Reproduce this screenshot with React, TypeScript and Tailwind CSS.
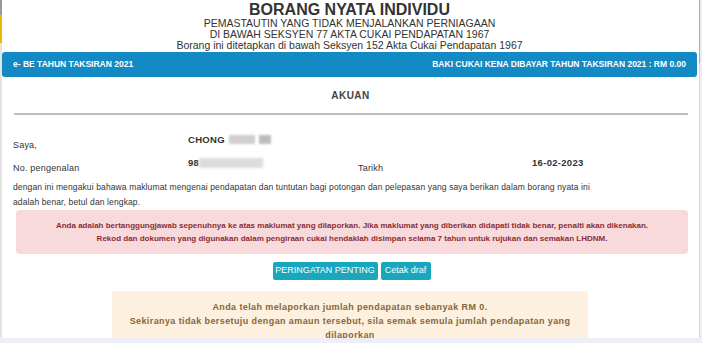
export default function App() {
  return (
    <div className="w-[702px] h-[343px] overflow-hidden flex flex-col bg-[#eeeef6] font-['Liberation_Sans',Arial,sans-serif]">
      <div className="flex flex-1 min-h-0">
        {/* left sliver of the page behind */}
        <div className="w-[2px] shrink-0 flex flex-col bg-white">
          <div className="h-[15px] bg-[#9a9a9a]" />
          <div className="h-[28px] bg-[#e6b800]" />
          <div className="flex-1 bg-[#e4e4e4]" />
        </div>

        <div className="w-[695px] shrink-0 bg-white overflow-hidden">
          {/* header */}
          <div className="h-[52px] text-center text-[#333] pt-[2px]">
            <div className="text-[16px] leading-[16px] font-bold">BORANG NYATA INDIVIDU</div>
            <div className="text-[10.5px] leading-[11px]">PEMASTAUTIN YANG TIDAK MENJALANKAN PERNIAGAAN</div>
            <div className="text-[10.5px] leading-[11px]">DI BAWAH SEKSYEN 77 AKTA CUKAI PENDAPATAN 1967</div>
            <div className="text-[10.5px] leading-[11px]">Borang ini ditetapkan di bawah Seksyen 152 Akta Cukai Pendapatan 1967</div>
          </div>

          {/* blue bar */}
          <div className="h-[25px] bg-[#138ac3] rounded-[3px] flex items-center justify-between px-[11px] text-white text-[8.5px] font-bold">
            <span>e- BE TAHUN TAKSIRAN 2021</span>
            <span>BAKI CUKAI KENA DIBAYAR TAHUN TAKSIRAN 2021 : RM 0.00</span>
          </div>

          <div className="pl-[11px] pr-[9px] text-[#333]">
            <div className="mt-[13px] h-[12px] leading-[12px] text-center text-[10px] font-bold tracking-[0.5px] text-[#444]">
              AKUAN
            </div>
            <div className="mt-[11px] h-[1.5px] bg-[#bdbdbd] ml-[1px]" />

            {/* Saya */}
            <div className="mt-[19px] h-[23px] flex text-[9px] tracking-[0.2px]">
              <div className="w-[175px] pt-[5px] leading-[12px]">Saya,</div>
              <div className="flex items-start gap-[4px] font-bold text-[9.5px] leading-[12px] tracking-[0.3px]">
                <span>CHONG</span>
                <span className="mt-[1px] w-[26px] h-[9px] bg-[#cfcfcf] blur-[1px]" />
                <span className="mt-[1px] w-[12px] h-[9px] bg-[#bdbdbd] blur-[1px]" />
              </div>
            </div>

            {/* No. pengenalan */}
            <div className="h-[23px] flex text-[9px] tracking-[0.2px]">
              <div className="w-[175px] pt-[5px] leading-[12px]">No. pengenalan</div>
              <div className="w-[170px] flex items-start font-bold text-[9.5px] leading-[12px] tracking-[0.3px]">
                <span>98</span>
                <span className="mt-[1px] w-[64px] h-[10px] bg-[#dcdcdc] blur-[1.5px]" />
              </div>
              <div className="w-[174px] pt-[5px] leading-[12px]">Tarikh</div>
              <div className="font-bold text-[9.5px] leading-[12px] tracking-[0.3px]">16-02-2023</div>
            </div>

            <p className="w-[605px] text-[8.5px] leading-[15px] tracking-[0.12px]">
              dengan ini mengakui bahawa maklumat mengenai pendapatan dan tuntutan bagi potongan dan pelepasan yang saya berikan dalam borang nyata ini adalah benar, betul dan lengkap.
            </p>

            <div className="ml-[3px] h-[44px] rounded-[4px] bg-[#f9dadc] flex flex-col items-center justify-center text-[8px] leading-[13px] font-bold text-[#8a2e33]">
              <div>Anda adalah bertanggungjawab sepenuhnya ke atas maklumat yang dilaporkan. Jika maklumat yang diberikan didapati tidak benar, penalti akan dikenakan.</div>
              <div>Rekod dan dokumen yang digunakan dalam pengiraan cukai hendaklah disimpan selama 7 tahun untuk rujukan dan semakan LHDNM.</div>
            </div>

            <div className="mt-[8px] flex justify-center gap-[3px] pl-[2px]">
              <button className="h-[18px] w-[105px] bg-[#19a7bd] text-white text-[9px] rounded-[2px]">PERINGATAN PENTING</button>
              <button className="h-[18px] w-[50px] bg-[#19a7bd] text-white text-[9px] rounded-[2px]">Cetak draf</button>
            </div>

            <div className="mt-[11px] ml-[99px] w-[476px] px-[10px] pt-[9px] pb-[6px] bg-[#fdf0de] rounded-[3px] text-center text-[9px] leading-[14px] font-bold tracking-[0.4px] text-[#86673c]">
              <div>Anda telah melaporkan jumlah pendapatan sebanyak RM 0.</div>
              <div>Sekiranya tidak bersetuju dengan amaun tersebut, sila semak semula jumlah pendapatan yang dilaporkan</div>
            </div>
          </div>
        </div>

        {/* right scroll gutter */}
        <div className="w-[5px] shrink-0 flex bg-[#eeeef6]">
          <div className="w-[2px] bg-white" />
          <div className="w-[1px] flex flex-col bg-[#d8d8dc]">
            <div className="h-[63px] bg-[#a9a9ad]" />
          </div>
        </div>
      </div>
      <div className="h-[5px] shrink-0 bg-[#eeeef6]" />
    </div>
  );
}
